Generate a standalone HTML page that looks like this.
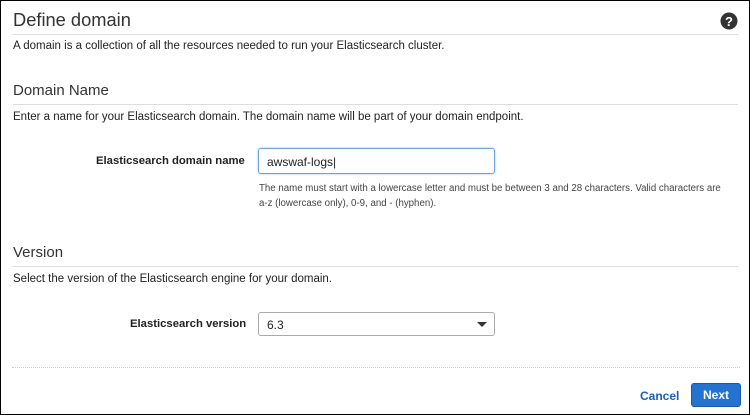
<!DOCTYPE html>
<html><head><style>
*{margin:0;padding:0;box-sizing:border-box}
body{width:750px;height:415px;background:#fff;font-family:"Liberation Sans",sans-serif;color:#222;position:relative;overflow:hidden}
.frame{position:absolute;left:0;top:0;width:750px;height:415px;border:1px solid #000}
.a{position:absolute;white-space:nowrap}
.line{position:absolute;left:13px;right:12px;height:1px;background:#ddd}
.t{font-size:11.5px;color:#222}
</style></head><body>
<div class="frame"></div>
<div class="a" style="left:13px;top:9px;font-size:18.3px;color:#333">Define domain</div>
<svg class="a" style="left:720px;top:12px" width="18" height="18" viewBox="0 0 18 18"><circle cx="9" cy="9" r="8.5" fill="#333"/><text x="9" y="14" font-family="Liberation Sans" font-weight="bold" font-size="13" fill="#fff" text-anchor="middle">?</text></svg>
<div class="line" style="top:34px"></div>
<div class="a t" style="left:13px;top:40px">A domain is a collection of all the resources needed to run your Elasticsearch cluster.</div>
<div class="a" style="left:13px;top:82px;font-size:15px;color:#333">Domain Name</div>
<div class="line" style="top:104px"></div>
<div class="a t" style="left:13px;top:111px">Enter a name for your Elasticsearch domain. The domain name will be part of your domain endpoint.</div>
<div class="a" style="left:96px;top:155px;font-size:11.3px;font-weight:bold">Elasticsearch domain name</div>
<div class="a" style="left:258px;top:148px;width:237px;height:26px;border:1px solid #6fa3dc;border-radius:3px;box-shadow:0 0 2px #9cc2ec;font-size:12px;padding:6px 0 0 8px">awswaf-logs|</div>
<div class="a" style="left:259px;top:181px;font-size:9.7px;color:#444;line-height:15px">The name must start with a lowercase letter and must be between 3 and 28 characters. Valid characters are<br>a-z (lowercase only), 0-9, and - (hyphen).</div>
<div class="a" style="left:13px;top:244px;font-size:15px;color:#333">Version</div>
<div class="line" style="top:266px"></div>
<div class="a t" style="left:13px;top:273px">Select the version of the Elasticsearch engine for your domain.</div>
<div class="a" style="left:130px;top:318px;font-size:11.3px;font-weight:bold">Elasticsearch version</div>
<div class="a" style="left:258px;top:312px;width:237px;height:24px;border:1px solid #aaa;border-radius:3px;font-size:12px;padding:5px 0 0 8px">6.3</div>
<div class="a" style="left:477px;top:322px;width:0;height:0;border-left:5px solid transparent;border-right:5px solid transparent;border-top:5px solid #333"></div>
<div class="a" style="left:12px;right:10px;top:367px;border-top:1px dotted #ccc"></div>
<div class="a" style="left:640px;top:389px;font-size:12px;font-weight:bold;color:#1a5fb4">Cancel</div>
<div class="a" style="left:691px;top:383px;width:50px;height:24px;background:#2473d0;border:1px solid #1a5aa8;border-radius:3px;color:#fff;font-size:12px;font-weight:bold;text-align:center;line-height:22px">Next</div>
</body></html>
